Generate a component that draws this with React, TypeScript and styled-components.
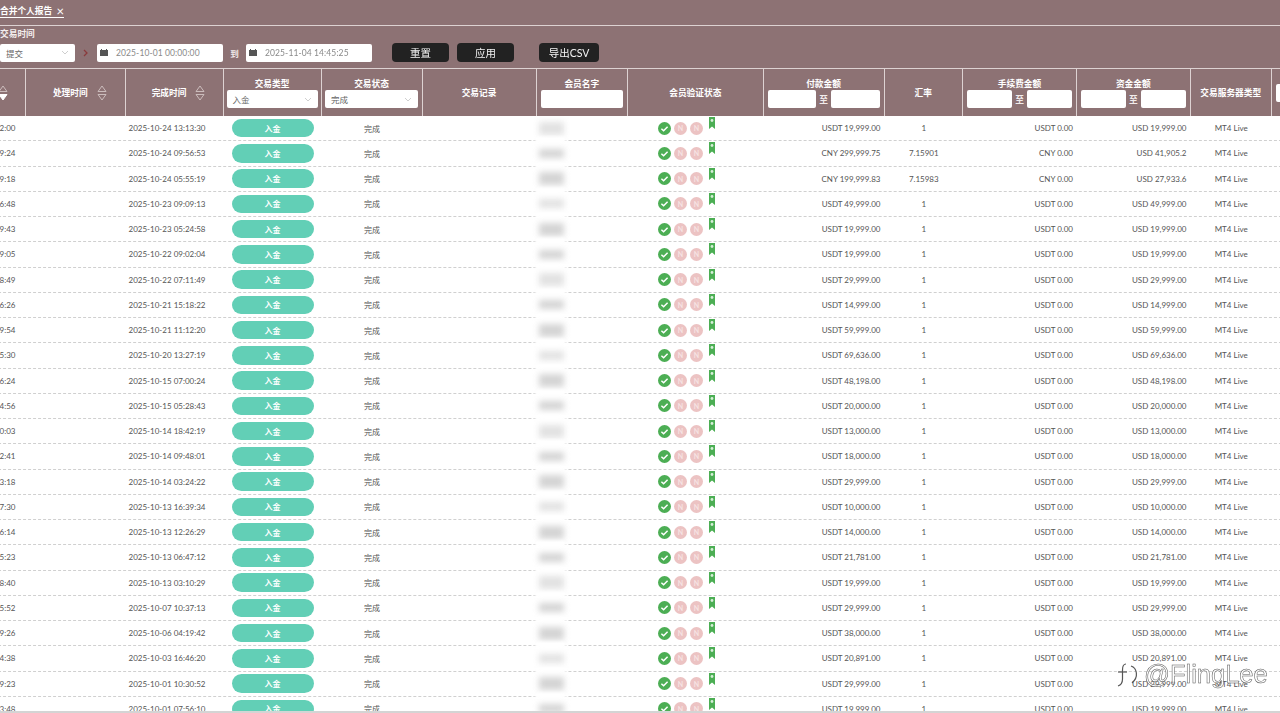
import React from "react";
import styled, { createGlobalStyle } from "styled-components";

const FONT = `Lato, "Noto Sans CJK SC", "Noto Sans", sans-serif`;
const COLUMNS = "98px 99.5px 98px 98px 101px 114px 91.5px 135.5px 121px 78.5px 114px 113.5px 81.5px 100px";
const BG = "#8d7274";
const LINE = "#ddd2d2";

const Global = createGlobalStyle`
  html, body { margin: 0; padding: 0; background: #fff; font-family: ${FONT}; }
  * { box-sizing: border-box; }
`;

const Page = styled.div`
  position: relative;
  width: 1280px;
  height: 713px;
  overflow: hidden;
  background: #fff;
`;
const Content = styled.div`
  height: 713px;
  display: flex;
  flex-direction: column;
  filter: blur(0.35px);
`;
const Top = styled.div`
  background: ${BG};
  height: 68px;
  flex: none;
  color: #fff;
`;
const TabBar = styled.div`
  height: 26px;
  border-bottom: 1px solid ${LINE};
  display: flex;
  align-items: flex-start;
`;
const Tab = styled.div`
  height: 18px;
  width: 64px;
  border-bottom: 1px solid #fff;
  font-size: 8.7px;
  font-weight: 700;
  line-height: 22px;
  display: flex;
  justify-content: space-between;
  white-space: nowrap;
`;
const Close = styled.span`
  font-size: 13px;
  font-weight: 400;
`;
const FilterLabel = styled.div`
  font-size: 8.7px;
  font-weight: 700;
  line-height: 12px;
  margin-top: 2px;
  color: #f4eeee;
`;
const FilterRow = styled.div`
  display: flex;
  align-items: center;
  margin-top: 3px;
  height: 19px;
`;
const SelectBox = styled.div<{ $w: number }>`
  width: ${(p) => p.$w}px;
  height: 18px;
  flex: none;
  background: #fff;
  border-radius: 2px;
  color: #666;
  font-size: 8.5px;
  display: flex;
  align-items: center;
  justify-content: space-between;
  padding: 0 6px;
  font-weight: 400;
`;
const Arrow = styled.span`
  margin: 0 9px 0 8px;
  width: 5px;
  flex: none;
  display: flex;
`;
const DateBox = styled.div`
  width: 126px;
  height: 18px;
  flex: none;
  background: #fff;
  border-radius: 2px;
  font-size: 8.5px;
  color: #8a8a8a;
  display: flex;
  align-items: center;
  gap: 8px;
  padding-left: 3px;
  letter-spacing: 0.1px;
`;
const To = styled.span`
  width: 23px;
  flex: none;
  text-align: center;
  font-size: 8.5px;
  color: #f2ecec;
  font-weight: 700;
`;
const Btn = styled.button<{ $w: number; $ml: number }>`
  width: ${(p) => p.$w}px;
  margin-left: ${(p) => p.$ml}px;
  height: 19px;
  flex: none;
  border: 0;
  border-radius: 4px;
  background: #222;
  color: #f4f4f4;
  font-family: ${FONT};
  font-size: 10.5px;
  padding: 0;
`;
const Clip = styled.div`
  flex: 1;
  overflow: hidden;
  min-height: 0;
`;
const Sheet = styled.div`
  margin-left: -72px;
  width: 1444px;
`;
const HeadRow = styled.div`
  position: relative;
  z-index: 1;
  display: grid;
  grid-template-columns: ${COLUMNS};
  height: 48px;
  background: ${BG};
  border-top: 1px solid ${LINE};
`;
const HeadCell = styled.div`
  border-right: 1px solid ${LINE};
  display: flex;
  flex-direction: column;
  align-items: center;
  justify-content: center;
  color: #fff;
  font-size: 8.7px;
  font-weight: 700;
  gap: 0;
  padding: 0 4px;
  white-space: nowrap;
`;
const SortWrap = styled.div`
  display: flex;
  align-items: center;
  justify-content: center;
  gap: 9px;
  padding-left: 9px;
`;
const HeadInput = styled.div`
  height: 18px;
  flex: 1 1 0;
  min-width: 0;
  background: #fff;
  border-radius: 2px;
`;
const RangeRow = styled.div`
  display: flex;
  align-items: center;
  gap: 3px;
  width: 100%;
  color: #f2ecec;
`;
const Row = styled.div`
  display: grid;
  grid-template-columns: ${COLUMNS};
  height: 25.26px;
  border-bottom: 1px dashed #d0d0d0;
  font-size: 8px;
  color: #555;
  background: #fff;
`;
const Cell = styled.div<{ $align?: string; $pr?: number }>`
  display: flex;
  align-items: center;
  justify-content: ${(p) => p.$align ?? "center"};
  padding-right: ${(p) => p.$pr ?? 0}px;
  white-space: nowrap;
`;
const Badge = styled.div`
  width: 82px;
  height: 18.5px;
  border-radius: 9.5px;
  background: #62cfb6;
  color: #fff;
  font-size: 8px;
  font-weight: 700;
  display: flex;
  align-items: center;
  justify-content: center;
`;
const MemberCell = styled.div`
  position: relative;
`;
const Mask = styled.div<{ $tone: number; $h: number }>`
  position: absolute;
  left: 0;
  top: -3px;
  bottom: -3px;
  width: 27px;
  background: #fff;
  box-shadow: 0 0 3px 1px #fff;
  &::after {
    content: "";
    position: absolute;
    left: 2px;
    right: 0;
    top: calc(50% - ${(p) => p.$h / 2}px);
    height: ${(p) => p.$h}px;
    background: rgb(${(p) => p.$tone}, ${(p) => p.$tone}, ${(p) => p.$tone});
    filter: blur(3px);
  }
`;
const Verify = styled.div`
  display: flex;
  align-items: center;
  gap: 3px;
  padding-left: 30px;
`;
const NDot = styled.span`
  width: 13px;
  height: 13px;
  border-radius: 50%;
  background: #ecc3c3;
  color: #f6e4e4;
  font-size: 7px;
  font-weight: 700;
  display: flex;
  align-items: center;
  justify-content: center;
`;
const Ribbon = styled.svg`
  margin: -10px 0 0 3px;
`;
const Watermark = styled.div`
  position: absolute;
  left: 1116px;
  top: 660px;
  display: flex;
  align-items: center;
  gap: 4px;
  color: rgba(255, 255, 255, 0.85);
  -webkit-text-stroke: 0.5px #555;
  font-family: "Liberation Sans", sans-serif;
  font-size: 25.5px;
  font-weight: 400;
  white-space: nowrap;
`;
const BottomBar = styled.div`
  position: absolute;
  left: 0;
  right: 0;
  bottom: 0;
  height: 2px;
  background: #d4d4d4;
`;

const Chevron = ({ color = "#cfcfcf" }: { color?: string }) => (
  <svg width="8" height="5" viewBox="0 0 8 5" fill="none">
    <path d="M1 1l3 3 3-3" stroke={color} strokeWidth="1" />
  </svg>
);
const Calendar = () => (
  <svg width="8" height="7" viewBox="0 0 8 7">
    <path d="M0 1h1V0h1v1h4V0h1v1h1v6H0z" fill="#555" />
  </svg>
);
const Sort = ({ active }: { active?: boolean }) => (
  <svg width="10" height="18" viewBox="0 0 10 18" fill="none" stroke="#cbbcbc" strokeWidth="1">
    <path d="M1 7.5L5 2l4 5.5z" />
    <path d="M1 10.5L5 16l4-5.5z" fill={active ? "#fff" : "none"} stroke={active ? "#fff" : "#cbbcbc"} />
  </svg>
);
const Check = () => (
  <svg width="13" height="13" viewBox="0 0 13 13">
    <circle cx="6.5" cy="6.5" r="6.5" fill="#4cae54" />
    <path d="M3.4 6.8l2.2 2 4-4" fill="none" stroke="#fff" strokeWidth="1.5" />
  </svg>
);
const RibbonIcon = () => (
  <Ribbon width="6" height="12" viewBox="0 0 6 12">
    <path d="M0 0h6v12L3 9.5 0 12z" fill="#4cae54" />
    <circle cx="3" cy="3.5" r="1.4" fill="#d6efd8" />
  </Ribbon>
);

type Rec = [string, string, string, string, string, string, string];
const U = (n: string, s: string, c: string): Rec => [
  s,
  c,
  `USDT ${n}.00`,
  "1",
  "USDT 0.00",
  `USD ${n}.00`,
  "",
];
const rows: Rec[] = [
  U("19,999", "2025-10-24 13:12:00", "2025-10-24 13:13:30"),
  ["2025-10-24 09:49:24", "2025-10-24 09:56:53", "CNY 299,999.75", "7.15901", "CNY 0.00", "USD 41,905.2", ""],
  ["2025-10-24 05:49:18", "2025-10-24 05:55:19", "CNY 199,999.83", "7.15983", "CNY 0.00", "USD 27,933.6", ""],
  U("49,999", "2025-10-23 09:06:48", "2025-10-23 09:09:13"),
  U("19,999", "2025-10-23 05:19:43", "2025-10-23 05:24:58"),
  U("19,999", "2025-10-22 08:59:05", "2025-10-22 09:02:04"),
  U("29,999", "2025-10-22 07:08:49", "2025-10-22 07:11:49"),
  U("14,999", "2025-10-21 15:16:26", "2025-10-21 15:18:22"),
  U("59,999", "2025-10-21 11:09:54", "2025-10-21 11:12:20"),
  U("69,636", "2025-10-20 13:25:30", "2025-10-20 13:27:19"),
  U("48,198", "2025-10-15 06:56:24", "2025-10-15 07:00:24"),
  U("20,000", "2025-10-15 05:24:56", "2025-10-15 05:28:43"),
  U("13,000", "2025-10-14 18:40:03", "2025-10-14 18:42:19"),
  U("18,000", "2025-10-14 09:42:41", "2025-10-14 09:48:01"),
  U("29,999", "2025-10-14 03:23:18", "2025-10-14 03:24:22"),
  U("10,000", "2025-10-13 16:37:30", "2025-10-13 16:39:34"),
  U("14,000", "2025-10-13 12:26:14", "2025-10-13 12:26:29"),
  U("21,781", "2025-10-13 06:45:23", "2025-10-13 06:47:12"),
  U("19,999", "2025-10-13 03:08:40", "2025-10-13 03:10:29"),
  U("29,999", "2025-10-07 10:35:52", "2025-10-07 10:37:13"),
  U("38,000", "2025-10-06 04:19:26", "2025-10-06 04:19:42"),
  U("20,891", "2025-10-03 16:44:38", "2025-10-03 16:46:20"),
  U("29,999", "2025-10-01 10:29:23", "2025-10-01 10:30:52"),
  U("19,999", "2025-10-01 07:53:48", "2025-10-01 07:56:10"),
];

const Range = () => (
  <RangeRow>
    <HeadInput />至<HeadInput />
  </RangeRow>
);

export default function App() {
  return (
    <Page>
      <Global />
      <Content>
        <Top>
          <TabBar>
            <Tab>
              合并个人报告<Close>×</Close>
            </Tab>
          </TabBar>
          <FilterLabel>交易时间</FilterLabel>
          <FilterRow>
            <SelectBox $w={75}>
              提交
              <Chevron />
            </SelectBox>
            <Arrow>
              <svg width="5" height="8" viewBox="0 0 5 8" fill="none">
                <path d="M1 1l3 3-3 3" stroke="#8a3a3c" strokeWidth="1.3" />
              </svg>
            </Arrow>
            <DateBox>
              <Calendar />
              2025-10-01 00:00:00
            </DateBox>
            <To>到</To>
            <DateBox>
              <Calendar />
              2025-11-04 14:45:25
            </DateBox>
            <Btn $w={57} $ml={20}>重置</Btn>
            <Btn $w={57} $ml={8}>应用</Btn>
            <Btn $w={60} $ml={25}>导出CSV</Btn>
          </FilterRow>
        </Top>
        <Clip>
          <Sheet>
            <HeadRow>
              <HeadCell>
                <SortWrap>
                  提交时间
                  <Sort active />
                </SortWrap>
              </HeadCell>
              <HeadCell>
                <SortWrap>
                  处理时间
                  <Sort />
                </SortWrap>
              </HeadCell>
              <HeadCell>
                <SortWrap>
                  完成时间
                  <Sort />
                </SortWrap>
              </HeadCell>
              <HeadCell>
                交易类型
                <SelectBox $w={91}>
                  入金
                  <Chevron />
                </SelectBox>
              </HeadCell>
              <HeadCell>
                交易状态
                <SelectBox $w={93}>
                  完成
                  <Chevron />
                </SelectBox>
              </HeadCell>
              <HeadCell>交易记录</HeadCell>
              <HeadCell>
                会员名字
                <RangeRow>
                  <HeadInput />
                </RangeRow>
              </HeadCell>
              <HeadCell>会员验证状态</HeadCell>
              <HeadCell>
                付款金额
                <Range />
              </HeadCell>
              <HeadCell>汇率</HeadCell>
              <HeadCell>
                手续费金额
                <Range />
              </HeadCell>
              <HeadCell>
                资金金额
                <Range />
              </HeadCell>
              <HeadCell>交易服务器类型</HeadCell>
              <HeadCell>
                <RangeRow>
                  <HeadInput />
                </RangeRow>
              </HeadCell>
            </HeadRow>
            {rows.map((r, i) => (
              <Row key={i}>
                <Cell>{r[0]}</Cell>
                <Cell />
                <Cell $pr={15}>{r[1]}</Cell>
                <Cell>
                  <Badge>入金</Badge>
                </Cell>
                <Cell>完成</Cell>
                <Cell />
                <MemberCell>
                  <Mask $tone={i % 3 === 0 ? 226 : 212} $h={i % 2 === 0 ? 13 : 9} />
                </MemberCell>
                <Verify>
                  <Check />
                  <NDot>N</NDot>
                  <NDot>N</NDot>
                  <RibbonIcon />
                </Verify>
                <Cell $align="flex-end" $pr={4}>{r[2]}</Cell>
                <Cell>{r[3]}</Cell>
                <Cell $align="flex-end" $pr={4}>{r[4]}</Cell>
                <Cell $align="flex-end" $pr={4}>{r[5]}</Cell>
                <Cell>MT4 Live</Cell>
                <Cell />
              </Row>
            ))}
          </Sheet>
        </Clip>
        <BottomBar />
      </Content>
      <Watermark>
        <svg width="24" height="26" viewBox="0 0 24 26" fill="none" stroke="#555" strokeWidth="1.2">
          <path d="M10 2C7 2 6.5 5 6.5 8v9c0 4-1.5 6-4.5 7" />
          <path d="M2 10h9" />
          <path d="M15 4c6 2 8 11 1 17" />
        </svg>
        @FlingLee
      </Watermark>
    </Page>
  );
}
